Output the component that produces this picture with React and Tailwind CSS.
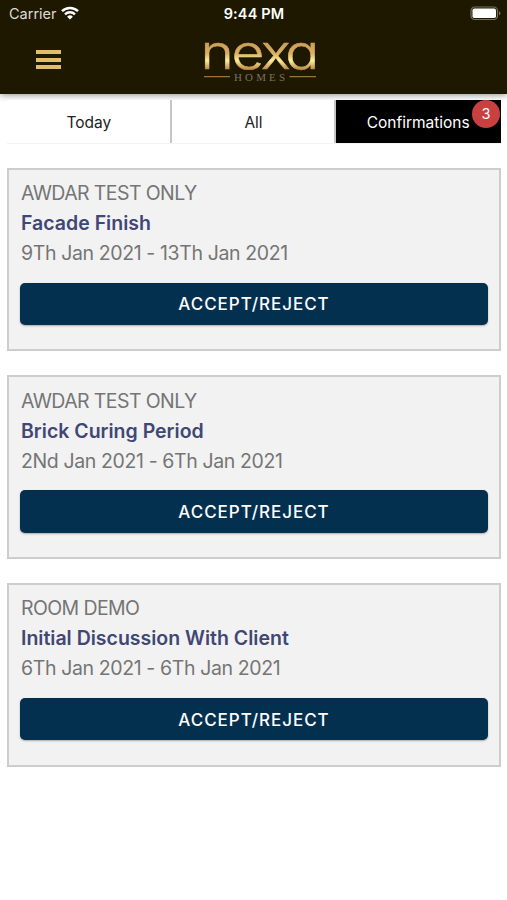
import { useState } from "react";

const TABS = [
  { id: "today", label: "Today" },
  { id: "all", label: "All" },
  { id: "confirmations", label: "Confirmations", count: 3 }
];

const ITEMS = [
  {
    id: 1,
    project: "AWDAR TEST ONLY",
    task: "Facade Finish",
    dates: "9Th Jan 2021 - 13Th Jan 2021"
  },
  {
    id: 2,
    project: "AWDAR TEST ONLY",
    task: "Brick Curing Period",
    dates: "2Nd Jan 2021 - 6Th Jan 2021"
  },
  {
    id: 3,
    project: "ROOM DEMO",
    task: "Initial Discussion With Client",
    dates: "6Th Jan 2021 - 6Th Jan 2021"
  }
];

export default function App() {
  const [activeTab, setActiveTab] = useState("confirmations");

  return (
    <div className="min-h-screen bg-white font-['Inter',sans-serif]">
      <header className="h-[94px] bg-[#1e1800] shadow-[0_1px_7px_rgba(0,0,0,0.45)]">
        <StatusBar />
        <div className="grid h-[66px] grid-cols-[1fr_124px_1fr] items-center">
          <button aria-label="Menu" className="ml-9 flex w-[25px] flex-col gap-[3.5px] pb-[3px]">
            <span className="h-1 bg-[#dfc069]" />
            <span className="h-1 bg-[#dfc069]" />
            <span className="h-1 bg-[#dfc069]" />
          </button>
          <Logo />
        </div>
      </header>

      <nav className="ml-[7px] mr-[6px] mt-1.5 flex h-11 border-b border-[#f3f3f3]">
        {TABS.map((tab) => (
          <Tab
            key={tab.id}
            tab={tab}
            active={tab.id === activeTab}
            onClick={() => setActiveTab(tab.id)}
          />
        ))}
      </nav>

      <main className="ml-[7px] mr-[6px] mt-[23.5px] flex flex-col gap-6">
        {ITEMS.map((item) => (
          <Card key={item.id} item={item} />
        ))}
      </main>
    </div>
  );
}

function StatusBar() {
  return (
    <div className="grid h-7 grid-cols-3 items-center pb-px pl-[9px] pr-[6px] text-white">
      <div className="flex items-center gap-1.5 text-[14.5px] text-[#dddbd5]">
        <span>Carrier</span>
        <svg viewBox="0 0 18 14" className="-ml-0.5 mb-0.5 h-[14px] w-[18px]" fill="none" stroke="white">
          <path d="M1 5.2a11.4 11.4 0 0 1 16 0" strokeWidth="2.5" />
          <path d="M4 8.3a7.1 7.1 0 0 1 10 0" strokeWidth="2.4" />
          <path d="M9 13.6 6.1 10.7a4.1 4.1 0 0 1 5.8 0z" fill="white" stroke="none" />
        </svg>
      </div>
      <div className="-ml-0.5 text-center text-[14.5px] font-semibold tracking-[0.15px]">9:44 PM</div>
      <svg viewBox="0 0 31 15" className="h-[15px] w-[31px] justify-self-end" fill="none">
        <rect x="1" y="1" width="26.5" height="12.5" rx="3.7" stroke="#77715f" strokeWidth="1.2" />
        <rect x="2.5" y="2.5" width="23.5" height="9.5" rx="1.8" fill="white" />
        <path d="M29 5.2c2 .8 2 3.3 0 4.1z" fill="#77715f" />
      </svg>
    </div>
  );
}

function Logo() {
  return (
    <svg viewBox="-4 0 124 46" className="h-[46px] w-[124px] overflow-visible">
      <defs>
        <linearGradient id="gold" gradientUnits="userSpaceOnUse" x1="0" y1="3" x2="0" y2="31">
          <stop offset="0" stopColor="#c99a55" />
          <stop offset="0.45" stopColor="#d9b063" />
          <stop offset="0.7" stopColor="#fbee9c" />
          <stop offset="1" stopColor="#c08c45" />
        </linearGradient>
      </defs>
      <text
        x="3.8 30 54.8 75.6"
        y="30.5"
        transform="scale(1.18 1)"
        fill="url(#gold)"
        stroke="url(#gold)"
        strokeWidth="0.5"
        className="text-[48px] font-light [font-feature-settings:'cv11']"
      >
        nexa
      </text>
      <path d="M8 38.7h26M93.5 38.7h26.5" stroke="#9a7639" strokeWidth="1.3" />
      <text
        x="38"
        y="42.5"
        textLength="51"
        fill="#77736a"
        className="font-['Liberation_Serif',serif] text-[11px]"
      >
        HOMES
      </text>
    </svg>
  );
}

function Tab({ tab, active, onClick }) {
  return (
    <button
      onClick={onClick}
      className={[
        "relative flex-1 border-r-2 pl-px pt-0.5 text-[15.5px]",
        active
          ? "border-black bg-black text-white"
          : "border-[#c6c6c6] bg-white text-[#222]"
      ].join(" ")}
    >
      {tab.label}
      {tab.count && (
        <span className="absolute -right-[1px] top-0 flex h-7 w-7 items-center justify-center rounded-full bg-[#c94040] text-[14.5px] text-white">
          {tab.count}
        </span>
      )}
    </button>
  );
}

function Card({ item }) {
  return (
    <section className="h-[183.7px] border-2 border-[#cdcdcd] bg-[#f2f2f2] px-[11px] pt-[8.5px] text-[19.5px] leading-[30px] text-[#757575]">
      <div className="pl-px tracking-[-0.6px]">{item.project}</div>
      <h2 className="pl-px font-semibold text-[#414774]">{item.task}</h2>
      <div className="pl-px tracking-[-0.38px]">{item.dates}</div>
      <button className="mt-[14.5px] block h-[42.5px] w-full rounded-[5px] bg-[#043050] pt-0.5 text-[17px] font-medium leading-none tracking-[0.95px] text-white shadow-[0_1px_2px_rgba(0,0,0,0.3)]">
        ACCEPT/REJECT
      </button>
    </section>
  );
}
